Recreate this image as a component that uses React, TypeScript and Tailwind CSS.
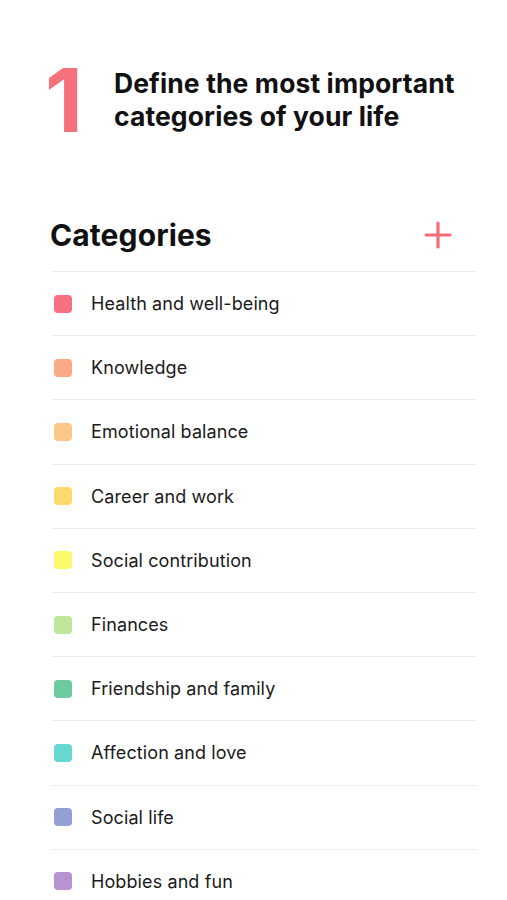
import React from "react";

const cats: { name: string; color: string }[] = [
  { name: "Health and well-being", color: "#f6717f" },
  { name: "Knowledge", color: "#f9aa85" },
  { name: "Emotional balance", color: "#fbc889" },
  { name: "Career and work", color: "#fcda6b" },
  { name: "Social contribution", color: "#fafa6c" },
  { name: "Finances", color: "#c2e59c" },
  { name: "Friendship and family", color: "#6ccb9e" },
  { name: "Affection and love", color: "#66d8d1" },
  { name: "Social life", color: "#949fd6" },
  { name: "Hobbies and fun", color: "#b893d1" },
];

export default function App() {
  return (
    <div
      className="w-[507px] h-[900px] bg-white overflow-hidden text-[#111]"
      style={{ fontFamily: "Inter, 'Noto Sans', sans-serif" }}
    >
      <div className="flex items-start pt-[55px] pl-[45px]">
        <div className="text-[88px] font-bold leading-[90px] text-[#f5727d] w-[69px]">1</div>
        <div className="text-[26.5px] font-bold leading-[33px] tracking-[0.1px] pt-[12px]">
          Define the most important
          <br />
          categories of your life
        </div>
      </div>
      <div className="flex items-center justify-between pl-[50px] pr-[54px] mt-[70px] h-[40px]">
        <div className="text-[30px] font-bold tracking-[0.1px]">Categories</div>
        <svg width="30" height="30" viewBox="0 0 30 30">
          <path d="M15 3v24M3 15h24" stroke="#f26d79" strokeWidth="3.2" strokeLinecap="round" />
        </svg>
      </div>
      <div className="ml-[52px] w-[424px] mt-[16px] border-t border-[#ececec]">
        {cats.map((c) => (
          <div key={c.name} className="h-[64.2px] flex items-center border-b border-[#ededed]">
            <div className="w-[18px] h-[18px] rounded-[4px] ml-[2px]" style={{ background: c.color }} />
            <div className="ml-[19px] text-[18px] tracking-[0.1px] text-[#1a1a1a]">{c.name}</div>
          </div>
        ))}
      </div>
    </div>
  );
}
